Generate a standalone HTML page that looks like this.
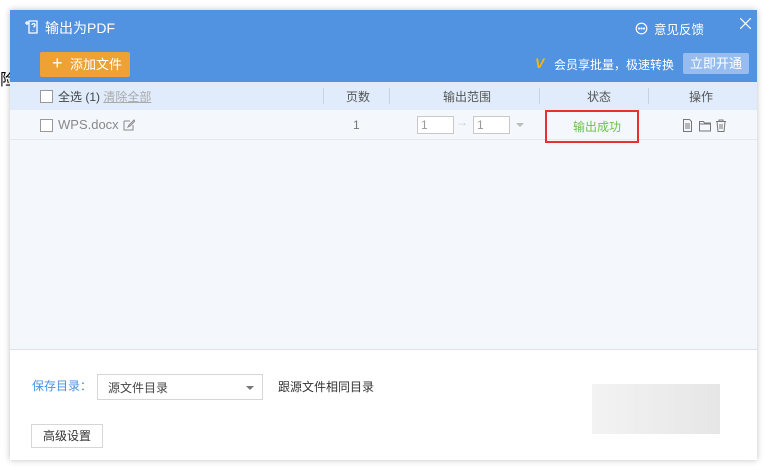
<!DOCTYPE html>
<html><head><meta charset="utf-8"><style>
*{margin:0;padding:0;box-sizing:border-box}
body{width:770px;height:470px;background:#fff;font-family:"Liberation Sans","Noto Sans CJK SC",sans-serif;font-size:12px;color:#444;position:relative;overflow:hidden}
.win{position:absolute;left:10px;top:10px;width:747px;height:450px;background:#fff;box-shadow:0 0 6px rgba(0,0,0,.25)}
.hd{position:absolute;left:0;top:0;width:747px;height:72px;background:#5192e1;color:#fff}
.a{position:absolute}
.th{position:absolute;left:0;top:72px;width:747px;height:28px;background:#e0ecfb;color:#555}
.body{position:absolute;left:0;top:100px;width:747px;height:240px;background:#f4f7fb;border-bottom:1px solid #dde3ea}
.sep{position:absolute;top:6px;width:1px;height:16px;background:#c8d3df}
.cb{position:absolute;width:13px;height:13px;border:1px solid #999;background:#fff}
.inp{position:absolute;width:37px;height:18px;border:1px solid #c9c9c9;background:#fff;color:#999;padding-left:3px;line-height:16px}
</style></head><body>
<div class="a" style="left:0;top:66px;font-size:16px;color:#000">险</div>
<div class="win">
<div class="hd">
 <svg class="a" style="left:14px;top:9px" width="16" height="16" viewBox="0 0 16 16" fill="none" stroke="#fff" stroke-width="1.3"><path d="M5 2h8v12H5z"/><path d="M1 4h4M3 2v4"/><path d="M8 6a1.5 1.5 0 1 1 2 1.5v1M9 11v.5"/></svg>
 <div class="a" style="left:35px;top:8px;font-size:14px">输出为PDF</div>
 <svg class="a" style="left:625px;top:12px" width="13" height="13" viewBox="0 0 13 13" fill="none" stroke="#fff" stroke-width="1.2"><circle cx="6.5" cy="6.5" r="5.3"/><circle cx="4" cy="6.5" r=".5" fill="#fff"/><circle cx="6.5" cy="6.5" r=".5" fill="#fff"/><circle cx="9" cy="6.5" r=".5" fill="#fff"/></svg>
 <div class="a" style="left:644px;top:9px;font-size:12.5px">意见反馈</div>
 <svg class="a" style="left:730px;top:8px" width="11" height="11" viewBox="0 0 11 11" stroke="#fff" stroke-width="1.2"><path d="M0 0L11 11M11 0L0 11"/></svg>
 <div class="a" style="left:30px;top:42px;width:90px;height:25px;background:#eea235;border-radius:2px;color:#fff;font-size:13px;line-height:25px"><span style="font-size:18px;position:absolute;left:12px;top:-1px">+</span><span style="position:absolute;left:30px">添加文件</span></div>
 <div class="a" style="left:525px;top:45px;color:#f5b800;font-weight:bold;font-style:italic;font-size:14px">V</div>
 <div class="a" style="left:544px;top:46px;font-size:12px">会员享批量，极速转换</div>
 <div class="a" style="left:673px;top:43px;width:66px;height:21px;background:#97bdf0;border-radius:2px;text-align:center;line-height:21px;font-size:13px">立即开通</div>
</div>
<div class="th">
 <div class="cb" style="left:30px;top:8px"></div>
 <div class="a" style="left:48px;top:6px;color:#444">全选 (1) <span style="color:#aaa;text-decoration:underline">清除全部</span></div>
 <div class="sep" style="left:313px"></div>
 <div class="a" style="left:336px;top:6px">页数</div>
 <div class="sep" style="left:379px"></div>
 <div class="a" style="left:433px;top:6px">输出范围</div>
 <div class="sep" style="left:529px"></div>
 <div class="a" style="left:577px;top:6px">状态</div>
 <div class="sep" style="left:638px"></div>
 <div class="a" style="left:679px;top:6px">操作</div>
</div>
<div class="body">
 <div class="a" style="left:0;top:29px;width:747px;height:1px;background:#e3e8ee"></div>
 <div class="cb" style="left:30px;top:9px"></div>
 <div class="a" style="left:48px;top:7px;color:#888;font-size:13px">WPS.docx</div>
 <svg class="a" style="left:113px;top:9px" width="12" height="12" viewBox="0 0 12 12" fill="none" stroke="#888" stroke-width="1"><path d="M1 2h6M1 2v9h9V6"/><path d="M5 8l1-2 5-5 1 1-5 5z"/></svg>
 <div class="a" style="left:343px;top:8px;color:#777">1</div>
 <div class="inp" style="left:407px;top:6px">1</div>
 <div class="a" style="left:446px;top:5px;color:#ccc">→</div>
 <div class="inp" style="left:463px;top:6px">1</div>
 <div class="a" style="left:506px;top:13px;border:4px solid transparent;border-top:4px solid #bbb"></div>
 <div class="a" style="left:535px;top:0;width:94px;height:33px;border:2px solid #e83030"></div>
 <div class="a" style="left:563px;top:8px;color:#6cc24a">输出成功</div>
 <svg class="a" style="left:672px;top:9px" width="50" height="13" viewBox="0 0 50 13" fill="none" stroke="#777" stroke-width="1"><path d="M1.5.5h6l2 2v10h-8z M3 5h5M3 7h5M3 9h5"/><path d="M17.5 2.5h4l1 1.5h6v8h-11z M17.5 5h11"/><path d="M34 2.5h10M37 2.5V1h4v1.5M35 2.5l1 10h6l1-10M38 5v5M40 5v5"/></svg>
</div>
<div class="a" style="left:22px;top:367px;color:#4a8fe0">保存目录：</div>
<div class="a" style="left:87px;top:364px;width:166px;height:26px;border:1px solid #d6d6d6;padding:4px 0 0 10px;color:#444">源文件目录<span style="position:absolute;right:8px;top:11px;border:4px solid transparent;border-top:4px solid #777"></span></div>
<div class="a" style="left:268px;top:368px;color:#333">跟源文件相同目录</div>
<div class="a" style="left:582px;top:374px;width:128px;height:50px;background:linear-gradient(90deg,#f3f3f3,#e6e6e6)"></div>
<div class="a" style="left:21px;top:414px;width:72px;height:24px;border:1px solid #d6d6d6;text-align:center;line-height:22px;color:#333">高级设置</div>
</div>
</body></html>
